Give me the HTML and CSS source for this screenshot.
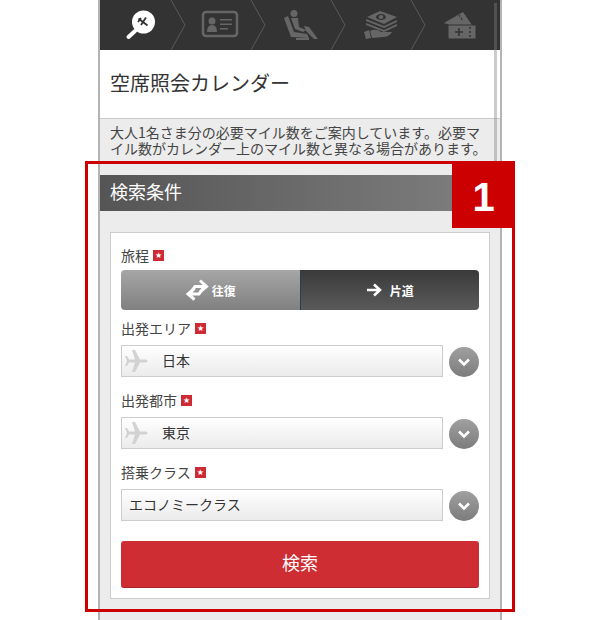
FILE: index.html
```html
<!DOCTYPE html>
<html lang="ja">
<head>
<meta charset="utf-8">
<title>空席照会カレンダー</title>
<link rel="stylesheet" href="styles.css">
</head>
<body>
<div class="shell">
  <nav class="steps">
    <svg class="steps-art" width="400" height="50" viewBox="0 0 400 50">
      <g fill="none" stroke="#5a5a5a" stroke-width="1">
        <path d="M71 0 L85 25 L71 50"/><path d="M151 0 L165 25 L151 50"/><path d="M231 0 L245 25 L231 50"/><path d="M311 0 L325 25 L311 50"/>
      </g>
      <g>
        <circle cx="43.5" cy="22" r="11.5" fill="#fff"/>
        <path d="M35 31 L28.5 37" stroke="#fff" stroke-width="4" stroke-linecap="round"/>
        <path d="M38.500 18.500 L47.500 25.500 M46 17.500 L41 25 M38 22 L41 18" fill="none" stroke="#333" stroke-width="1.800"/>
      </g>
      <g fill="#666">
        <rect x="103" y="12" width="34" height="24" rx="3" fill="none" stroke="#666" stroke-width="2.5"/>
        <circle cx="112" cy="21" r="3.5"/><path d="M107 32 q0 -7 5 -7 q5 0 5 7z"/>
        <path d="M120 19h12v1.5h-12zM120 23.500h12v1.500h-12zM120 28h8v1.500h-8z"/>
      </g>
      <g fill="#666">
        <circle cx="194" cy="13.500" r="3.500"/>
        <path d="M184 18 L188 16 L194 32 L207 34 L209 38 L191 37 Z"/>
        <path d="M191 18 L198 18 L199 27 L206 30 L203 32 L195 29 Z"/>
        <path d="M204 26 L209 27 L218 39 L214 39 L206 31 Z"/>
        <rect x="196" y="38" width="13" height="2"/>
      </g>
      <g fill="#666">
        <path d="M267 17 L280 11 L297 17 L284 24 Z"/>
        <ellipse cx="281" cy="17" rx="5" ry="3" fill="#333"/>
        <ellipse cx="281" cy="17" rx="2.400" ry="2" fill="#666"/>
        <path d="M266 19 L284 26 L297 20 V22 L284 28 L266 21 Z M266 23 L284 30 L297 24 V26 L284 32 L266 25 Z"/>
        <path d="M264 32 L269 30 L271 38 L266 39 Z"/>
        <path d="M270 31 Q276 28 281 32 L287 32 L292 32 Q289 37 283 37 L272 38 Z"/>
      </g>
      <g fill="#666">
        <path d="M344 23 L363 12 L372 25 L350 25 Z"/>
        <path d="M359 15 L363 21" stroke="#333" stroke-width="1.200" stroke-dasharray="2 1.500"/>
        <rect x="348" y="25" width="28" height="14" rx="1" stroke="#333" stroke-width="1"/>
        <path d="M355 32h8M359 28v8" stroke="#333" stroke-width="1.500"/>
        <path d="M370 27v2M370 31v2M370 35v2" stroke="#333" stroke-width="1.500"/>
      </g>
    </svg>
  </nav>
  <h1 class="title">空席照会カレンダー</h1>
  <div class="lower">
    <p class="note">大人1名さま分の必要マイル数をご案内しています。必要マイル数がカレンダー上のマイル数と異なる場合があります。</p>
    <h2 class="bar">検索条件</h2>
    <form class="card">
      <div class="label">旅程<span class="req">★</span></div>
      <div class="toggle">
        <div class="tog tog-off">
          <svg width="24" height="24" viewBox="0 0 24 24"><path d="M6 14 L10 8.500 H21 M15 2.500 L21.500 8.500 L15 14 M18 10.500 L14 16 H3 M9.500 10.500 L3 16 L9.500 21.500" fill="none" stroke="#fff" stroke-width="3"/></svg>
          <span>往復</span>
        </div>
        <div class="tog tog-on">
          <svg width="16" height="14" viewBox="0 0 16 14"><path d="M1 7 H13 M8 1.500 L14 7 L8 12.500" fill="none" stroke="#fff" stroke-width="2.600"/></svg>
          <span>片道</span>
        </div>
      </div>
      <div class="label label-tight">出発エリア<span class="req">★</span></div>
      <div class="row">
        <div class="select">
          <svg class="plane" width="24" height="24" viewBox="0 0 24 24"><path d="M23 12 L21 10.500 L15 10.500 L10 1 L7 1 L10 10.500 L4 10.500 L2 7 L0 7 L2 12 L0 17 L2 17 L4 13.500 L10 13.500 L7 23 L10 23 L15 13.500 L21 13.500 Z" fill="#d2d2d2"/></svg>
          <span class="val">日本</span>
        </div>
        <div class="chev"><svg width="14" height="9" viewBox="0 0 14 9"><path d="M2 1.500 L7 6.500 L12 1.500" fill="none" stroke="#fff" stroke-width="2.600"/></svg></div>
      </div>
      <div class="label">出発都市<span class="req">★</span></div>
      <div class="row">
        <div class="select">
          <svg class="plane" width="24" height="24" viewBox="0 0 24 24"><path d="M23 12 L21 10.500 L15 10.500 L10 1 L7 1 L10 10.500 L4 10.500 L2 7 L0 7 L2 12 L0 17 L2 17 L4 13.500 L10 13.500 L7 23 L10 23 L15 13.500 L21 13.500 Z" fill="#d2d2d2"/></svg>
          <span class="val">東京</span>
        </div>
        <div class="chev"><svg width="14" height="9" viewBox="0 0 14 9"><path d="M2 1.500 L7 6.500 L12 1.500" fill="none" stroke="#fff" stroke-width="2.600"/></svg></div>
      </div>
      <div class="label">搭乗クラス<span class="req">★</span></div>
      <div class="row">
        <div class="select select-plain"><span class="val">エコノミークラス</span></div>
        <div class="chev"><svg width="14" height="9" viewBox="0 0 14 9"><path d="M2 1.500 L7 6.500 L12 1.500" fill="none" stroke="#fff" stroke-width="2.600"/></svg></div>
      </div>
      <div class="submit">検索</div>
    </form>
  </div>
</div>
<div class="scrollbar"></div>
<div class="frame"></div>
<div class="badge">1</div>
</body>
</html>
```

FILE: styles.css
```css
* { box-sizing: border-box; }
html, body { margin: 0; padding: 0; height: 620px; overflow: hidden; background: #fff; }
body { position: relative; font-family: "Noto Sans CJK JP", "Liberation Sans", sans-serif; color: #333; }
.shell { width: 404px; margin-left: 98px; height: 620px; border-left: 2px solid #b4b4b4; border-right: 2px solid #b4b4b4; display: flex; flex-direction: column; }
.steps { height: 50px; background: #333; flex: none; }
.steps-art { display: block; }
.title { margin: 0; height: 69px; flex: none; padding-left: 10px; font-size: 20px; font-weight: 400; line-height: 66px; color: #333; background: #fff; border-bottom: 1px solid #c8c8c8; }
.lower { flex: 1; background: #ececec; }
.note { margin: 0; padding: 5px 10px 0; font-size: 14px; line-height: 16px; height: 56px; color: #444; }
.bar { margin: 0; height: 36px; padding-left: 10px; font-size: 18px; font-weight: 400; line-height: 32px; color: #fff; background: linear-gradient(90deg, #555, #808080); }
.card { margin: 21px 10px 0; height: 367px; background: #fff; border: 1px solid #ccc; padding: 12px 10px 0; }
.label { font-size: 14px; line-height: 20px; height: 20px; margin-top: 13px; color: #444; display: flex; align-items: center; }
.card > .label:first-child { margin-top: 0; }
.label-tight { margin-top: 8px; }
.req { width: 11px; height: 11px; margin-left: 4px; background: #ce2a35; color: #fff; font-size: 8px; line-height: 11px; text-align: center; font-family: "DejaVu Sans", sans-serif; }
.toggle { display: flex; height: 40px; margin-top: 5px; border-radius: 4px; overflow: hidden; }
.tog { flex: 1; display: flex; align-items: center; justify-content: center; gap: 3px; color: #fff; font-size: 12px; font-weight: 700; }
.tog-off { background: linear-gradient(180deg, #a6a6a6, #808080); }
.tog-on { background: linear-gradient(180deg, #3a3a3a, #5a5a5a); border-left: 1px solid #2f3b47; gap: 8px; }
.row { display: flex; align-items: flex-end; justify-content: space-between; margin-top: 7px; height: 32px; }
.select { width: 322px; height: 32px; border: 1px solid #ccc; background: linear-gradient(180deg, #fff, #ebebeb); display: flex; align-items: center; font-size: 14px; color: #333; padding-left: 3px; }
.val { padding-bottom: 2px; }
.plane { flex: none; margin-right: 13px; }
.select-plain { padding-left: 7px; }
.chev { width: 30px; height: 30px; border-radius: 50%; background: linear-gradient(180deg, #a0a0a0, #7c7c7c); display: flex; align-items: center; justify-content: center; }
.submit { margin-top: 20px; height: 47px; border-radius: 3px; background: #ce2d33; border-bottom: 1px solid #a82228; color: #fff; font-size: 18px; line-height: 43px; text-align: center; }
.scrollbar { position: absolute; left: 494px; top: 3px; width: 3px; height: 172px; background: rgba(128, 128, 128, 0.4); }
.frame { position: absolute; left: 85px; top: 161px; width: 430px; height: 451px; border: 3px solid #c00; }
.badge { position: absolute; left: 452px; top: 161px; width: 63px; height: 67px; background: #c00; color: #fff; font-family: "Liberation Sans", sans-serif; font-size: 40px; font-weight: 700; line-height: 73px; text-align: center; }
```
